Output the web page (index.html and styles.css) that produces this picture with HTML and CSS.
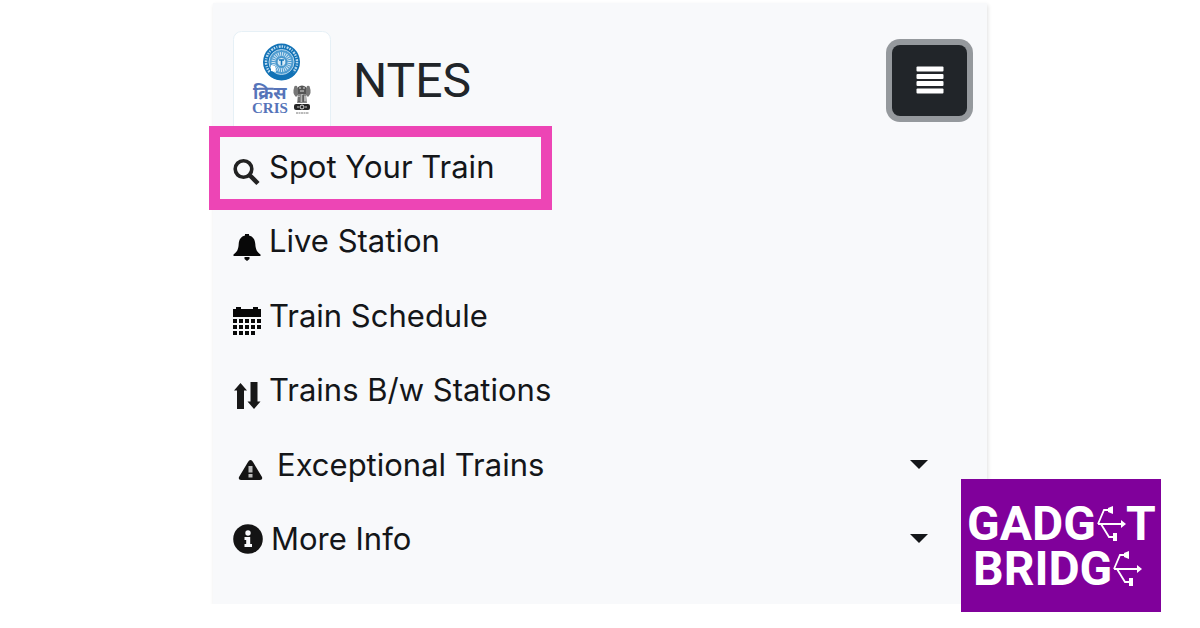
FILE: index.html
```html
<!DOCTYPE html>
<html lang="en">
<head>
    <meta charset="UTF-8">
    <meta name="viewport" content="width=device-width, initial-scale=1.0">
    <title>NTES</title>
    <link rel="stylesheet" href="styles.css">
</head>
<body>
    <div class="card">
        <header class="header">
            <svg class="logo" viewBox="0 0 98 98" role="img" aria-label="Indian Railways, CRIS">
                <rect x="0.5" y="0.5" width="97" height="110" rx="8" fill="#fff" stroke="#e6f0f6"/>
                <!-- railways seal -->
                <circle cx="48.500" cy="31" r="18.500" fill="#1272b6"/>
                <circle cx="48.500" cy="31" r="15.500" fill="none" stroke="#b9d8ed" stroke-width="2.500" stroke-dasharray="1.500 1.200 1 1.400 2 1" pathLength="97"/>
                <path d="M35 43a18 18 0 0 0 27 0l-4-5H39z" fill="#1272b6"/>
                <circle cx="48.500" cy="31" r="12.500" fill="#4d9bd0" stroke="#b5d6ec"/>
                <circle cx="48.500" cy="31" r="8" fill="none" stroke="#cfe4f2" stroke-width="4" stroke-dasharray="1 1"/>
                <circle cx="48.500" cy="31" r="4.500" fill="#d9ebf6" stroke="#3c8dc5"/>
                <path d="M46 29h5M48.500 28.500v6" stroke="#1272b6" stroke-width="1.500"/>
                <path d="M38 34l4 1 1 6-5-1z" fill="#fff"/>
                <text class="logo-hindi" x="20" y="68">क्रिस</text>
                <text class="logo-cris" x="19" y="82">CRIS</text>
                <!-- lion emblem -->
                <circle cx="69" cy="60" r="5.500" fill="#555"/>
                <path d="M61 57q0-3 3-2l1 3v6l-2 2q-4-4-2-9zM77 57q0-3-3-2l-1 3v6l2 2q4-4 2-9z" fill="#777"/>
                <path d="M65 63h8l1 9H64z" fill="#888"/>
                <path d="M66 57h2M70 57h2M67 60h4M66 65v5M69 63v8M72 65v5" stroke="#ddd"/>
                <path d="M66 66v5M70 64v7" stroke="#333"/>
                <rect x="61" y="73" width="16" height="6" rx="2" fill="#252525"/>
                <circle cx="69" cy="76" r="2" fill="none" stroke="#ddd"/>
                <path d="M64 76h2M72 76h2" stroke="#ccc"/>
                <path d="M63 82h13" stroke="#777" stroke-width="1" stroke-dasharray="2 .5"/>
            </svg>
            <h1 class="title">NTES</h1>
            <button class="menu-button" type="button" aria-label="Menu" aria-expanded="true">
                <svg width="28" height="28" viewBox="0 0 28 28" fill="#fff">
                    <rect x="0.500" y="0.500" width="27" height="5" rx="1"/>
                    <rect x="0.500" y="8" width="27" height="5" rx="1"/>
                    <rect x="0.500" y="15" width="27" height="5" rx="1"/>
                    <rect x="0.500" y="22.500" width="27" height="5" rx="1"/>
                </svg>
            </button>
        </header>

        <nav>
            <ul class="menu">
                <li class="menu-row highlighted">
                    <a class="menu-item" href="#spot">
                        <svg class="icon low" viewBox="0 0 28 28" fill="none" stroke="#222">
                            <circle cx="10.500" cy="11" r="8.300" stroke-width="3.600"/>
                            <path d="M17 17.500l8 8" stroke-width="4.500"/>
                        </svg>
                        <span>Spot Your Train</span>
                    </a>
                </li>
                <li class="menu-row">
                    <a class="menu-item" href="#live">
                        <svg class="icon low" viewBox="0 0 28 28" fill="#080808">
                            <path d="M12 1h4v1.500c4 1 6 4 6.300 8.500.300 5.500 1.700 8 5.200 10.500V23H.5v-1.500C4 19 5.400 16.500 5.700 11 6 6.500 8 3.500 12 2.500z"/>
                            <path d="M11.500 24h5v2l-2.500 2-2.500-2z"/>
                        </svg>
                        <span>Live Station</span>
                    </a>
                </li>
                <li class="menu-row">
                    <a class="menu-item" href="#schedule">
                        <svg class="icon low" viewBox="0 0 28 28" fill="#080808">
                            <path d="M0 2h3V0h5v2h12V0h5v2h3v8H0z"/>
                            <path d="M0 12h4v4H0zM6 12h4v4H6zM12 12h4v4h-4zM18 12h4v4h-4zM24 12h4v4h-4zM0 18h4v4H0zM6 18h4v4H6zM12 18h4v4h-4zM18 18h4v4h-4zM24 18h4v4h-4zM0 24h4v4H0zM6 24h4v4H6zM12 24h4v4h-4zM18 24h4v4h-4z"/>
                        </svg>
                        <span>Train Schedule</span>
                    </a>
                </li>
                <li class="menu-row">
                    <a class="menu-item" href="#between">
                        <svg class="icon low" viewBox="0 0 28 28" fill="#181818">
                            <path d="M7.500 1L14 8.500h-3V27H4V8.500H1zM17.500 0h7v19.500h3L21 27l-6.500-7.500h3z"/>
                        </svg>
                        <span>Trains B/w Stations</span>
                    </a>
                </li>
                <li class="menu-row">
                    <button class="menu-item" type="button">
                        <svg class="icon wide low" viewBox="0 0 36 28">
                            <path d="M17.500 4q1.500 0 2.500 2l9 15q1 3-2 3H8q-3 0-2-3l9-15q1-2 2.500-2z" fill="#141414"/>
                            <path d="M15.500 10h4v6.500h-4zM15.500 18h4v3.500h-4z" fill="#bbb"/>
                        </svg>
                        <span>Exceptional Trains</span>
                        <span class="caret"></span>
                    </button>
                </li>
                <li class="menu-row">
                    <button class="menu-item" type="button">
                        <svg class="icon info" viewBox="0 0 30 30">
                            <circle cx="15" cy="15" r="14.800" fill="#141414"/>
                            <circle cx="15" cy="9" r="2.700" fill="#f8f9fb"/>
                            <path d="M11.500 13h5.700v7H19v3h-7.500v-3h1.700v-4h-1.700z" fill="#f8f9fb"/>
                        </svg>
                        <span>More Info</span>
                        <span class="caret"></span>
                    </button>
                </li>
            </ul>
        </nav>
    </div>

    <!-- publisher badge over the corner of the card -->
    <div class="badge">
        <div class="badge-line">
            <span>GADG</span>
            <svg class="usb" viewBox="0 0 30 36" fill="none" stroke="#fff" stroke-width="1.800">
                <path d="M2 18h24M2 18L8 4h5M5 18l8 13h5"/>
                <path d="M25 14l5 4-5 4zM12 2l5-2v8l-5-2zM17 27h4v8h-4z" fill="#fff" stroke="none"/>
            </svg>
            <span>T</span>
        </div>
        <div class="badge-line">
            <span>BRIDG</span>
            <svg class="usb" viewBox="0 0 30 36" fill="none" stroke="#fff" stroke-width="1.800">
                <path d="M2 18h24M2 18L8 4h5M5 18l8 13h5"/>
                <path d="M25 14l5 4-5 4zM12 2l5-2v8l-5-2zM17 27h4v8h-4z" fill="#fff" stroke="none"/>
            </svg>
        </div>
    </div>
</body>
</html>
```
FILE: styles.css
```css
*,
*::after {
    box-sizing: border-box;
}
body {
    margin: 0;
    background-color: #fff;
    color: #141619;
    font-family: Inter, "Open Sans", sans-serif;
}
.card {
    max-width: 774px;
    margin: 3px auto 0;
    padding: 28px 20px;
    background-color: #f8f9fb;
    box-shadow: 1px 2px 4px rgba(0, 0, 0, 0.12);
}
.header {
    display: flex;
    align-items: center;
    gap: 22px;
}
.logo {
    width: 98px;
    height: 98px;
}
.logo-hindi {
    font: bold 18px "Noto Sans Devanagari", "Noto Sans", sans-serif;
    fill: #5674b9;
}
.logo-cris {
    font: bold 15px "Liberation Serif", serif;
    fill: #5674b9;
}
.title {
    margin: 0;
    font-family: Roboto, sans-serif;
    font-size: 48px;
    font-weight: 400;
    color: #212529;
}
.menu-button {
    display: flex;
    align-items: center;
    justify-content: center;
    width: 75px;
    height: 71px;
    margin-left: auto;
    padding: 0;
    border: none;
    border-radius: 8px;
    background-color: #212529;
    box-shadow: 0 0 0 6px #95999d;
    cursor: pointer;
}
.menu {
    display: grid;
    grid-auto-rows: 1fr;
    min-height: 447px;
    margin: 0;
    padding: 0;
    list-style: none;
}
.menu-row {
    display: flex;
    position: relative;
}
.menu-item {
    display: flex;
    align-items: center;
    gap: 8px;
    width: 100%;
    padding: 0;
    border: none;
    background: none;
    color: inherit;
    font-family: inherit;
    font-size: 31px;
    font-weight: 400;
    text-align: left;
    text-decoration: none;
    cursor: pointer;
}
.highlighted::after {
    content: "";
    position: absolute;
    top: -3px;
    left: -24px;
    width: 343px;
    height: 84px;
    border: 11px solid #ed45b5;
    pointer-events: none;
}
.icon {
    flex: none;
    width: 28px;
    height: 28px;
}
.low {
    margin-top: 12px;
}
.wide {
    width: 36px;
}
.info {
    width: 30px;
    height: 30px;
}
.caret {
    margin: 0 39px 0 auto;
    border-top: 9px solid #141619;
    border-left: 9px solid transparent;
    border-right: 9px solid transparent;
}
.badge {
    position: absolute;
    top: 479px;
    right: 39px;
    width: 200px;
    height: 133px;
    padding: 22px 0 0 6px;
    background-color: #80009b;
    color: #fff;
    font-family: Roboto, sans-serif;
    font-size: 48px;
    font-weight: 700;
    line-height: 45px;
}
.badge-line {
    display: flex;
    align-items: center;
}
.badge-line + .badge-line {
    padding-left: 6px;
}
.usb {
    width: 30px;
    height: 36px;
}
```
